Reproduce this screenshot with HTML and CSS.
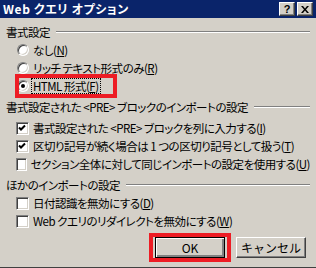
FILE: index.html
```html
<!DOCTYPE html>
<html lang="ja">
  <head>
    <meta charset="UTF-8" />
    <meta name="viewport" content="width=device-width, initial-scale=1.0" />
    <title>Web クエリ オプション</title>
    <link rel="stylesheet" href="styles.css">
  </head>
  <body>
    <div class="dialog">
      <!-- Title bar -->
      <div class="titlebar">
        <span class="title">Web クエリ オプション</span>
        <div class="title-buttons">
          <span class="tbtn">?</span>
          <span class="tbtn">
            <svg width="8" height="7" viewBox="0 0 8 7">
              <path d="M0 0h2l2 2.5 2-2.5h2l-3 3.5 3 3.5h-2l-2-2.5-2 2.5h-2l3-3.5z" fill="#000" />
            </svg>
          </span>
        </div>
      </div>

      <div class="content">
        <!-- Format -->
        <div class="group first">
          <div class="group-head"><span>書式設定</span><span class="line"></span></div>
          <div class="item"><span class="radio"></span><span>なし(<u>N</u>)</span></div>
          <div class="item"><span class="radio"></span><span>リッチ テキスト形式のみ(<u>R</u>)</span></div>
          <div class="item marked">
            <span class="radio checked"></span><span class="focus">HTML 形式(<u>F</u>)</span>
            <span class="redbox redbox-option"></span>
          </div>
        </div>

        <!-- PRE blocks -->
        <div class="group">
          <div class="group-head"><span>書式設定された &lt;PRE&gt; ブロックのインポートの設定</span><span class="line"></span></div>
          <div class="items spaced">
            <div class="item"><span class="check on"><svg width="9" height="9" viewBox="0 0 9 9"><path d="M1 3.5l2 2 4-4" stroke="#000" stroke-width="2" fill="none" /></svg></span><span>書式設定された &lt;PRE&gt; ブロックを列に入力する(<u>I</u>)</span></div>
            <div class="item"><span class="check on"><svg width="9" height="9" viewBox="0 0 9 9"><path d="M1 3.5l2 2 4-4" stroke="#000" stroke-width="2" fill="none" /></svg></span><span>区切り記号が続く場合は 1 つの区切り記号として扱う(<u>T</u>)</span></div>
            <div class="item"><span class="check"></span><span>セクション全体に対して同じインポートの設定を使用する(<u>U</u>)</span></div>
          </div>
        </div>

        <!-- Other -->
        <div class="group">
          <div class="group-head"><span>ほかのインポートの設定</span><span class="line"></span></div>
          <div class="item"><span class="check"></span><span>日付認識を無効にする(<u>D</u>)</span></div>
          <div class="item"><span class="check"></span><span>Web クエリのリダイレクトを無効にする(<u>W</u>)</span></div>
        </div>

        <div class="buttons">
          <div class="btn-wrap">
            <button class="btn default">OK</button>
            <span class="redbox redbox-ok"></span>
          </div>
          <button class="btn">キャンセル</button>
        </div>
      </div>
    </div>
  </body>
</html>
```

FILE: styles.css
```css
body {
  margin: 0;
  font-family: "Noto Sans CJK JP", "Liberation Sans", sans-serif;
  font-size: 12px;
  font-feature-settings: "palt";
  color: #000;
}
.dialog {
  width: 316px;
  height: 268px;
  background-color: #d4d0c8;
  border-bottom: 1px solid #404040;
  box-sizing: border-box;
  overflow: hidden;
}
.titlebar {
  height: 18px;
  background-color: #0a246a;
  display: flex;
  align-items: center;
  justify-content: space-between;
  padding: 0 3px 0 3px;
}
.title {
  color: #fff;
  font-weight: bold;
  line-height: 18px;
  letter-spacing: 0.6px;
}
.title-buttons {
  display: flex;
  gap: 2px;
}
.tbtn {
  width: 16px;
  height: 14px;
  box-sizing: border-box;
  background-color: #d4d0c8;
  border: 1px solid;
  border-color: #fff #404040 #404040 #fff;
  box-shadow: inset -1px -1px #808080;
  display: flex;
  align-items: center;
  justify-content: center;
  font-family: "Liberation Sans", sans-serif;
  font-weight: bold;
  font-size: 11px;
  line-height: 1;
}
.content {
  padding: 0 6px;
  border-bottom: 1px solid #808080;
  height: 249px;
  font-size: 11.5px;
  letter-spacing: -0.5px;
}
.group {
  margin-top: 3px;
}
.group.first {
  margin-top: 5px;
}
.group-head {
  height: 18px;
  display: flex;
  align-items: center;
}
.line {
  flex: 1;
  margin: 0 0 0 6px;
  height: 1px;
  border-top: 1px solid #808080;
  background-color: #fff;
}
.items.spaced {
  padding-top: 3px;
}
.item {
  height: 18px;
  display: flex;
  align-items: center;
  gap: 4px;
  padding-left: 11px;
  white-space: nowrap;
  position: relative;
}
.radio {
  width: 12px;
  height: 12px;
  box-sizing: border-box;
  border-radius: 50%;
  background-color: #fff;
  border: 1px solid;
  border-color: #808080 #fff #fff #808080;
  box-shadow: inset 1px 1px #404040, inset -1px -1px #d4d0c8;
  display: flex;
  align-items: center;
  justify-content: center;
}
.radio.checked::after {
  content: "";
  width: 4px;
  height: 4px;
  border-radius: 50%;
  background-color: #000;
}
.check {
  width: 13px;
  height: 13px;
  box-sizing: border-box;
  margin-left: -1px;
  background-color: #fff;
  border: 1px solid;
  border-color: #808080 #fff #fff #808080;
  box-shadow: inset 1px 1px #404040, inset -1px -1px #d4d0c8;
  display: flex;
  align-items: center;
  justify-content: center;
}
.check svg {
  display: block;
}
.focus {
  outline: 1px dotted #000;
  outline-offset: 0;
  padding: 0 1px;
  margin-left: -1px;
  line-height: 14px;
}
.redbox {
  position: absolute;
  border: 4px solid #ed1c24;
  pointer-events: none;
}
.redbox-option {
  left: 9px;
  top: -3px;
  width: 94px;
  height: 16px;
}
.buttons {
  display: flex;
  justify-content: flex-end;
  gap: 11px;
  margin-top: 7px;
  padding-right: 4px;
}
.btn-wrap {
  position: relative;
}
.btn {
  width: 70px;
  height: 21px;
  box-sizing: border-box;
  padding: 0;
  font-family: inherit;
  font-size: 12px;
  color: #000;
  background-color: #d4d0c8;
  border: 1px solid;
  border-color: #fff #404040 #404040 #fff;
  box-shadow: inset -1px -1px #808080;
  display: block;
}
.btn.default {
  border: 1px solid #000;
  box-shadow: inset 1px 1px #fff, inset -2px -2px #808080;
}
.redbox-ok {
  left: -6px;
  top: -4px;
  width: 74px;
  height: 21px;
}
```
